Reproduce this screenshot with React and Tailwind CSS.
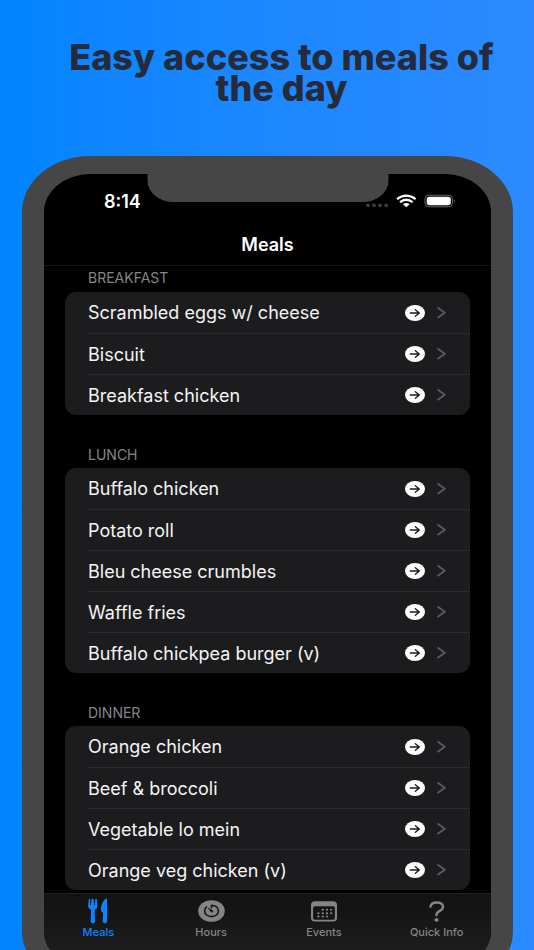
const sections = [
  { title: "Breakfast", meals: ["Scrambled eggs w/ cheese", "Biscuit", "Breakfast chicken"] },
  {
    title: "Lunch",
    meals: ["Buffalo chicken", "Potato roll", "Bleu cheese crumbles", "Waffle fries", "Buffalo chickpea burger (v)"],
  },
  { title: "Dinner", meals: ["Orange chicken", "Beef & broccoli", "Vegetable lo mein", "Orange veg chicken (v)"] },
];

function ArrowBadge() {
  return (
    <svg width="20" height="16" viewBox="0 0 20 16" aria-hidden="true" className="shrink-0">
      <ellipse cx="10" cy="8" rx="10" ry="8" fill="#fff" />
      <path d="M5.3 8H14M10.4 4.8L14.3 8L10.4 11.2" fill="none" stroke="#1c1c1e" strokeWidth="1.4" strokeLinecap="round" strokeLinejoin="round" />
    </svg>
  );
}

function Chevron() {
  return (
    <svg width="9" height="12" viewBox="0 0 9 12" aria-hidden="true" className="shrink-0">
      <path d="M1.2 1L7.8 5.8L1.2 10.6" fill="none" stroke="#5a5a5e" strokeWidth="1.9" strokeLinecap="round" strokeLinejoin="round" />
    </svg>
  );
}

function StatusIcons() {
  return (
    <svg width="91" height="14" viewBox="0 0 91 14" aria-hidden="true">
      <g fill="#3c3c3e">
        <circle cx="3" cy="11.3" r="1.9" />
        <circle cx="9" cy="11.3" r="1.9" />
        <circle cx="15" cy="11.3" r="1.9" />
        <circle cx="21.2" cy="11.3" r="1.9" />
      </g>
      <g fill="none" stroke="#fff" strokeWidth="2.2">
        <path d="M32 5.2Q41.3 -1.8 50.6 5.2" />
        <path d="M35 8.1Q41.3 3.4 47.6 8.1" />
      </g>
      <path d="M38 10.3Q41.3 7.6 44.6 10.3L41.3 13.2Z" fill="#fff" />
      <rect x="60" y="1.2" width="27.5" height="11.6" rx="4" fill="none" stroke="#69696b" />
      <rect x="61.7" y="2.8" width="24.1" height="8.4" rx="2.6" fill="#fff" />
      <path d="M88.8 5.2Q90.8 7 88.8 8.8Z" fill="#69696b" />
    </svg>
  );
}

function MealsIcon() {
  return (
    <svg width="20" height="26" viewBox="0 0 20 26" aria-hidden="true" fill="#0a84ff">
      <path d="M.7 1.2Q1.3.3 1.9 1.2L2.3 7.2Q2.6 8 2.9 7.2L3.5 1.1Q4.8.2 5.6 1.1L6.1 7.2Q6.4 8 6.7 7.2L7.3 1.2Q8.2.3 8.9 1.2L9.4 8.2Q9.5 10.2 7.2 11.4L6.7 12.3L7.1 23.6Q6.8 25.4 4.9 25.4Q3 25.4 2.7 23.6L3.1 12.3L2.6 11.4Q.1 10.2.1 8.2Z" />
      <path d="M19.1 1.1Q18.6.2 17.3 1Q13 5 12.8 12.2Q12.8 13.6 14.5 14.3L15.1 15.5L14.7 23.6Q15 25.4 17 25.4Q19 25.4 19.1 23.6Z" />
    </svg>
  );
}

function HoursIcon() {
  return (
    <svg width="27" height="22" viewBox="0 0 27 22" aria-hidden="true">
      <ellipse cx="13.5" cy="11" rx="13.3" ry="10.8" fill="#858587" />
      <path d="M13.5 7.6V5.4C17.6 5.4 20.4 7.7 20.4 11C20.4 14.2 17.4 16.6 13.5 16.6C9.6 16.6 6.6 14.2 6.6 11C6.6 9.3 7.3 8 8.6 6.9" fill="none" stroke="#171717" strokeWidth="1.6" strokeLinecap="round" strokeLinejoin="round" />
      <path d="M10.1 8L14.7 10.6Q15.3 11.5 14.4 12.1Q13.5 12.4 12.8 11.7Z" fill="#171717" stroke="#171717" strokeWidth=".5" strokeLinejoin="round" />
    </svg>
  );
}

function EventsIcon() {
  const dots = [
    [11.8, 8.8], [16, 8.8], [20.2, 8.8],
    [7.4, 12.2], [11.8, 12.2], [16, 12.2], [20.2, 12.2],
    [7.4, 15.6], [11.8, 15.6], [16, 15.6],
  ];
  return (
    <svg width="26" height="21" viewBox="0 0 26 21" aria-hidden="true">
      <path fillRule="evenodd" fill="#858587" d="M4 .3H22Q26 .3 26 3.8V17Q26 20.6 22 20.6H4Q0 20.6 0 17V3.8Q0 .3 4 .3ZM4 5.2Q2.1 5.2 2.1 6.9V16.9Q2.1 18.8 4.2 18.8H21.8Q23.9 18.8 23.9 16.9V6.9Q23.9 5.2 22 5.2Z" />
      {dots.map(([x, y]) => (
        <ellipse key={x + "-" + y} cx={x} cy={y} rx="1.2" ry="1" fill="#858587" />
      ))}
    </svg>
  );
}

function InfoIcon() {
  return (
    <svg width="16" height="21" viewBox="0 0 16 21" aria-hidden="true">
      <path d="M1.5 5.6C1.9 3 4.2 1.4 7.7 1.4C11.5 1.4 14 3.2 14 5.8C14 8 12.6 9.1 10.4 10.2C8.2 11.3 7.5 12.1 7.5 14" fill="none" stroke="#858587" strokeWidth="2.5" strokeLinecap="round" />
      <ellipse cx="7.5" cy="18.9" rx="2.1" ry="1.8" fill="#858587" />
    </svg>
  );
}

const tabs = [
  { name: "Meals", Icon: MealsIcon, active: true },
  { name: "Hours", Icon: HoursIcon },
  { name: "Events", Icon: EventsIcon },
  { name: "Quick Info", Icon: InfoIcon },
];

export default function App() {
  return (
    <main className="h-screen overflow-hidden bg-linear-to-r from-[#0084ff] to-[#2b8aff] pr-[21px] pl-[22px] font-['Inter',sans-serif]">
      <h1 className="pt-[42px] pl-7 text-center text-[36px] leading-[31px] font-extrabold text-[#252b3a]">
        Easy access to meals of the day
      </h1>
      <div className="relative mt-[52px] overflow-hidden rounded-[68px/56px] border-x-[22px] border-y-[18px] border-[#464646] bg-black">
        <div className="absolute top-0 left-1/2 h-7 w-[241px] -translate-x-1/2 bg-[#464646] [border-radius:0_0_26px_26px/0_0_21px_21px]" />
        <div className="flex h-[54px] items-center justify-between pr-[35px] pl-[60px] text-[18px] font-semibold text-white">
          <time>8:14</time>
          <StatusIcons />
        </div>
        <h2 className="h-[38px] border-b border-[#151516] pt-[5px] text-center text-[18px] leading-6 font-semibold text-white">Meals</h2>
        <div className="pr-[21px] pb-[3px] pl-[21px]">
          {sections.map(({ title, meals }, i) => (
            <section key={title}>
              <h3 className={`pl-[23px] text-[14px] leading-4 text-[#858589] uppercase ${i ? "pt-8 pb-[5px]" : "pt-1 pb-[6px]"}`}>{title}</h3>
              <ul className="rounded-[11px] bg-[#1c1c1e] pl-[23px]">
                {meals.map((meal, j) => (
                  <li key={meal} className={j ? "border-t border-[#2a2a2c]" : ""}>
                    <button type="button" className={`flex w-full items-center gap-3 pr-6 text-left text-[18px] text-[#f4f4f4] ${j ? "h-10" : "h-[41px]"}`}>
                      <span className="flex-1">{meal}</span>
                      <ArrowBadge />
                      <Chevron />
                    </button>
                  </li>
                ))}
              </ul>
            </section>
          ))}
        </div>
        <nav className="-mx-0.5 grid h-[76px] grid-cols-4 items-start border-t border-[#202021] bg-linear-to-b from-[#121212] to-[#202020]">
          {tabs.map(({ name, Icon, active }) => (
            <button key={name} type="button" className={`flex flex-col items-center pt-[3px] text-[11px] leading-[14px] font-medium ${active ? "text-[#0a84ff]" : "text-[#858587]"}`}>
              <span className="flex h-7 items-center">
                <Icon />
              </span>
              {name}
            </button>
          ))}
        </nav>
      </div>
    </main>
  );
}
